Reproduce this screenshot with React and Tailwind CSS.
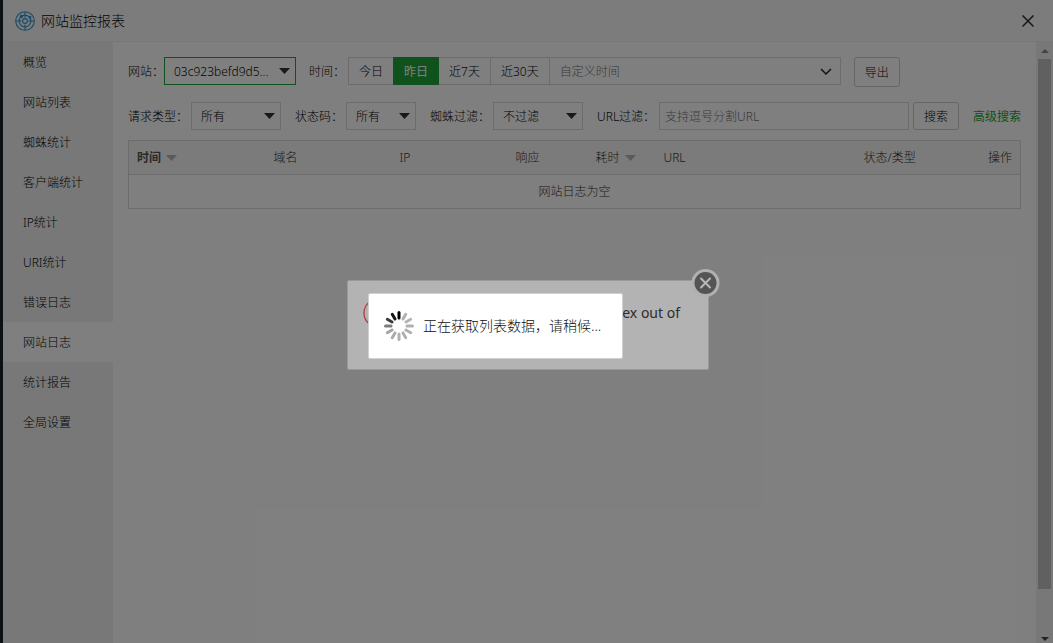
import { useState } from 'react'

const menu = ['概览', '网站列表', '蜘蛛统计', '客户端统计', 'IP统计', 'URI统计', '错误日志', '网站日志', '统计报告', '全局设置']
const ranges = ['今日', '昨日', '近7天', '近30天']

const columns = [
  { name: '时间', width: 'w-[137px]', sort: true, bold: true },
  { name: '域名', width: 'w-[126px]' },
  { name: 'IP', width: 'w-[116px]' },
  { name: '响应', width: 'w-[80px]' },
  { name: '耗时', width: 'w-[68px]', sort: true },
  { name: 'URL', width: 'w-[200px]' },
  { name: '状态/类型', width: 'w-[90px]' },
  { name: '操作', width: 'w-auto', right: true },
]

const spokes = ['#000', '#b0b0b0', '#b4b4b4', '#b0b0b0', '#b0b0b0', '#b0b0b0', '#b0b0b0', '#aaa', '#a4a4a4', '#7c7c7c', '#3c3c3c', '#141414']

function Logo() {
  return (
    <svg width="20" height="20" viewBox="0 0 20 20" fill="none" stroke="#2a95d6" strokeWidth="1.1">
      <circle cx="10" cy="10" r="9.3" />
      <circle cx="10" cy="10" r="5.9" />
      <circle cx="10" cy="10" r="2.4" />
      <path d="M10 1v5.5M10 13.5V19M1 10h5.5M13.5 10H19" />
      <circle cx="6.4" cy="5.4" r="1.1" fill="#2a95d6" />
      <circle cx="15" cy="6.4" r=".8" fill="#2a95d6" />
    </svg>
  )
}

function Spinner() {
  return (
    <svg width="30" height="30" viewBox="0 0 30 30" className="shrink-0">
      {spokes.map((color, i) => (
        <line key={i} x1="15" y1="1.5" x2="15" y2="7" stroke={color} strokeWidth="3" strokeLinecap="round" transform={`rotate(${i * 30} 15 15)`} />
      ))}
    </svg>
  )
}

function Caret({ className }) {
  return (
    <svg width="11" height="6" viewBox="0 0 11 6" className={className}>
      <path d="M0 0h11L5.5 6z" fill="currentColor" />
    </svg>
  )
}

function Picker({ id, label, options, className, border = 'border-[#d8d8d8]', gap = 'gap-[3px]' }) {
  return (
    <div className={`flex items-center ${gap}`}>
      <label htmlFor={id} className="pt-[2px] whitespace-nowrap">{label}</label>
      <div className="relative">
        <select id={id} className={`h-7 appearance-none border bg-white pl-[9px] pr-5 pt-[2px] outline-none ${border} ${className}`}>
          {options.map(o => <option key={o}>{o}</option>)}
        </select>
        <Caret className="pointer-events-none absolute right-[6px] top-[11px] text-[#333]" />
      </div>
    </div>
  )
}

function Sidebar({ active, onSelect }) {
  return (
    <nav className="w-[110px] shrink-0 bg-[#f0f0f0]">
      {menu.map(item => (
        <button key={item} onClick={() => onSelect(item)}
          className={`block h-10 w-full pl-5 pt-[2px] text-left ${item === active ? 'bg-white' : ''}`}>
          {item}
        </button>
      ))}
    </nav>
  )
}

function Filters() {
  const [range, setRange] = useState('昨日')

  return (
    <>
      <div className="flex h-[30px] items-start">
        <Picker id="site" label="网站：" options={['03c923befd9d5...']} className="w-[132px]" border="border-[#20a53a]" gap="gap-0" />
        <span className="ml-[13px] mr-[3px] pt-px leading-7">时间：</span>
        <div className="flex h-7">
          {ranges.map(r => (
            <button key={r} onClick={() => setRange(r)}
              className={`-ml-px border px-[10px] pt-[2px] whitespace-nowrap first:ml-0 ${r === range ? 'z-10 border-[#20a53a] bg-[#20a53a] font-normal text-white' : 'border-[#d8d8d8]'}`}>
              {r}
            </button>
          ))}
          <div className="relative -ml-px">
            <input aria-label="自定义时间" placeholder="自定义时间" className="h-7 w-[292px] border border-[#d8d8d8] px-[10px] outline-none placeholder:text-[#757575]" />
            <svg width="12" height="8" viewBox="0 0 12 8" fill="none" stroke="#222" strokeWidth="1.5" className="pointer-events-none absolute right-[9px] top-[11px]">
              <path d="M1 1l5 5 5-5" />
            </svg>
          </div>
        </div>
        <button className="ml-[13px] h-[30px] rounded-[3px] border border-[#ccc] px-[10px] pt-[2px]">导出</button>
      </div>
      <div className="mt-[15px] flex items-center">
        <div className="flex gap-[14px]">
          <Picker id="method" label="请求类型：" options={['所有', 'GET', 'POST']} className="w-[90px]" />
          <Picker id="status" label="状态码：" options={['所有', '200', '404', '500']} className="w-[70px]" />
          <Picker id="spider" label="蜘蛛过滤：" options={['不过滤', '只显示蜘蛛']} className="w-[90px]" />
        </div>
        <label htmlFor="url" className="ml-[14px] mr-1 pt-[2px] whitespace-nowrap">URL过滤：</label>
        <input id="url" placeholder="支持逗号分割URL" className="h-7 min-w-0 flex-1 border border-[#d8d8d8] px-[5px] outline-none placeholder:text-[#757575]" />
        <button className="ml-1 h-7 rounded-[3px] border border-[#ccc] px-[10px] pt-[2px]">搜索</button>
        <a href="#advanced" className="ml-[14px] pt-[2px] font-normal whitespace-nowrap text-[#20a53a]">高级搜索</a>
      </div>
    </>
  )
}

function LogTable() {
  return (
    <table className="mt-[10px] w-full table-fixed border-collapse border border-[#d8d8d8] text-[#333]">
      <thead>
        <tr className="h-[34px] border-b border-[#d8d8d8] bg-[#f6f6f6]">
          {columns.map(c => (
            <th key={c.name} className={`px-2 ${c.width} ${c.right ? 'text-right' : 'text-left'} ${c.bold ? 'font-bold text-[#555]' : 'font-light'}`}>
              <span className="whitespace-nowrap">
                {c.name}
                {c.sort && <Caret className="ml-[5px] inline text-[#b4b4b4]" />}
              </span>
            </th>
          ))}
        </tr>
      </thead>
      <tbody>
        <tr className="h-[34px]">
          <td colSpan={columns.length} className="text-center">网站日志为空</td>
        </tr>
      </tbody>
    </table>
  )
}

function Scrollbar() {
  return (
    <div className="flex w-[17px] shrink-0 flex-col items-center bg-[#f1f1f1]">
      <div className="flex h-[17px] items-center">
        <svg width="8" height="4" viewBox="0 0 8 4"><path d="M0 4h8L4 0z" fill="#888" /></svg>
      </div>
      <div className="w-[13px] grow-[11] bg-[#c1c1c1]" />
      <div className="grow" />
      <div className="flex h-[6px] items-start">
        <svg width="8" height="4" viewBox="0 0 8 4"><path d="M0 0h8L4 4z" fill="#444" /></svg>
      </div>
    </div>
  )
}

function ErrorMessage() {
  return (
    <div role="alert" className="absolute left-[347px] top-[280px] h-[90px] w-[362px] rounded-xs border border-[#999] bg-[#b3b3b3] text-sm font-normal text-[#2c2c2c]">
      <div className="flex items-center justify-between pl-[15px] pr-7 pt-[17px]">
        <svg width="30" height="30" viewBox="0 0 30 30" fill="none" stroke="#b23c3c" strokeWidth="1.3">
          <circle cx="15" cy="15" r="14" />
          <path d="M10 10l10 10M20 10L10 20" />
        </svg>
        <span>index out of</span>
      </div>
      <button aria-label="关闭" className="absolute -right-3 -top-3 size-[29px]">
        <svg width="29" height="29" viewBox="0 0 29 29" fill="none">
          <circle cx="14.5" cy="14" r="12.5" fill="#545454" stroke="#b0b0b0" strokeWidth="3" />
          <path d="M10 9.5l9 9M19 9.5l-9 9" stroke="#b8b8b8" strokeWidth="2" strokeLinecap="round" />
        </svg>
      </button>
    </div>
  )
}

function Loading({ text }) {
  return (
    <div role="status" className="absolute left-[368px] top-[293px] flex h-[66px] w-[255px] items-center gap-[9px] rounded-xs border border-[#d0d0d0] bg-white pl-[15px] text-sm text-[#111]">
      <Spinner />
      <span className="whitespace-nowrap">{text}</span>
    </div>
  )
}

export default function App() {
  const [active, setActive] = useState('网站日志')

  return (
    <div lang="zh-CN" className="relative flex h-screen overflow-hidden bg-[#1b232c] pl-[3px] font-['Noto_Sans','Noto_Sans_CJK_SC',sans-serif] text-xs font-light text-[#080808]">
      <div className="flex min-w-0 flex-1 flex-col bg-white">
        <header className="flex h-[42px] shrink-0 items-center border-b border-[#eee] bg-[#f8f8f8] pl-3 pr-[19px]">
          <Logo />
          <h1 className="ml-[6px] text-sm">网站监控报表</h1>
          <button aria-label="关闭窗口" className="ml-auto">
            <svg width="12" height="12" viewBox="0 0 12 12" stroke="#2d2c3b" strokeWidth="1.5">
              <path d="M.5.5l11 11M11.5.5L.5 11.5" />
            </svg>
          </button>
        </header>
        <div className="flex min-h-0 flex-1">
          <Sidebar active={active} onSelect={setActive} />
          <main className="min-w-0 flex-1 p-[15px]">
            <Filters />
            <LogTable />
          </main>
          <Scrollbar />
        </div>
      </div>
      <div className="absolute inset-0 z-20 bg-black/50" />
      <div className="absolute inset-0 z-30">
        <ErrorMessage />
        <Loading text="正在获取列表数据，请稍候..." />
      </div>
    </div>
  )
}
